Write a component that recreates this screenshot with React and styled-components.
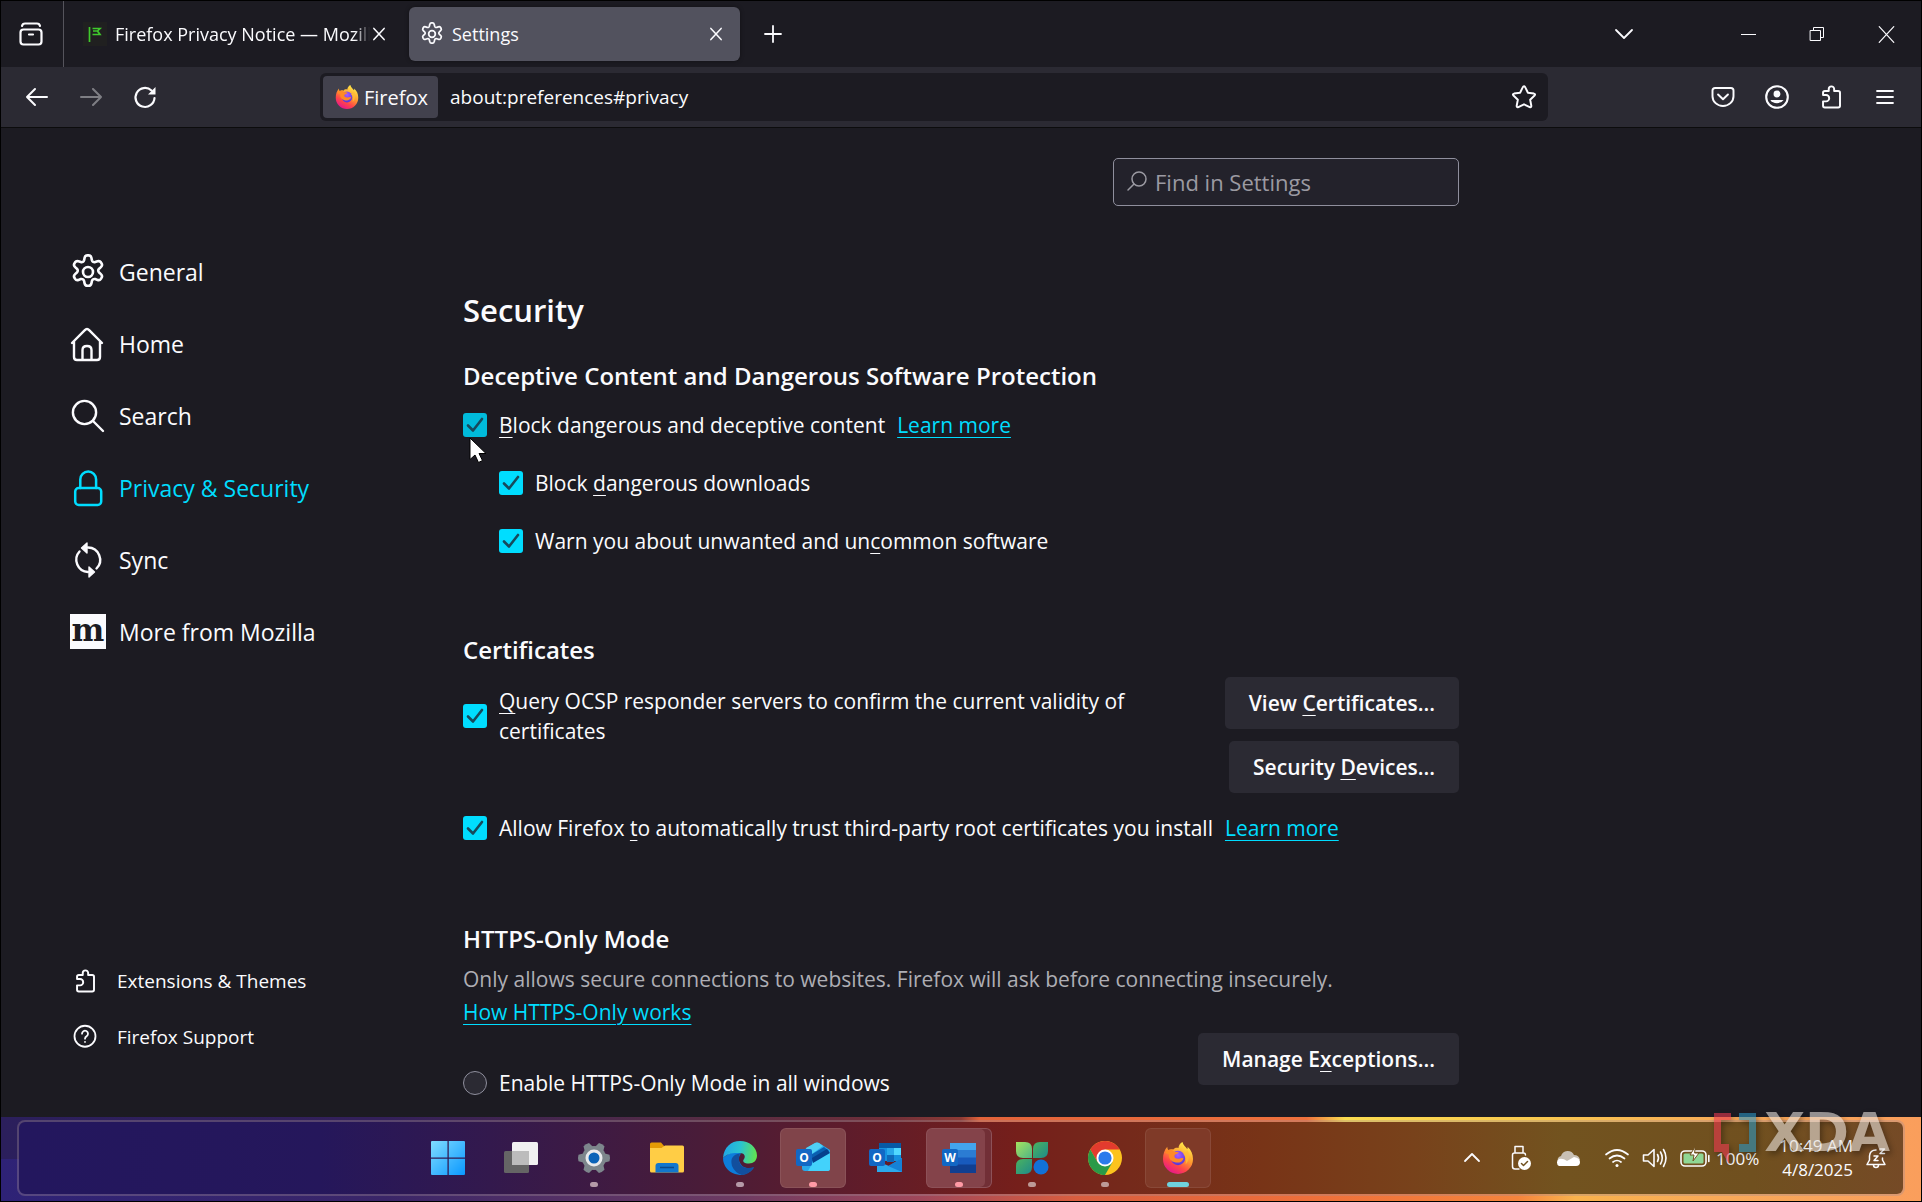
import React from 'react'
import styled, { createGlobalStyle, css } from 'styled-components'

const fonts = {
  ui: '"Open Sans", "Noto Sans", sans-serif',
}

const colors = {
  chrome: '#1c1b22',
  toolbar: '#2b2a33',
  text: '#fbfbfe',
  muted: '#aeaeb4',
  accent: '#00ddff',
}

const GlobalStyle = createGlobalStyle`
  * {
    box-sizing: border-box;
  }
  html, body, #root {
    height: 100%;
    margin: 0;
  }
  body {
    background: #000;
    color: ${colors.text};
    font-family: ${fonts.ui};
    font-size: 21px;
    overflow: hidden;
  }
  button, input {
    font-family: inherit;
    color: inherit;
  }
  svg {
    display: block;
    flex: none;
    overflow: visible;
  }
`

const Desktop = styled.div`
  display: flex;
  flex-direction: column;
  height: 100vh;
  padding: 1px;
`

const Browser = styled.div`
  display: flex;
  flex: 1;
  flex-direction: column;
  min-height: 0;
  background: ${colors.chrome};
`

/* tabs */

const TabStrip = styled.header`
  display: flex;
  align-items: stretch;
  height: 66px;
`

const PlainButton = styled.button`
  display: flex;
  align-items: center;
  justify-content: center;
  flex: none;
  width: ${props => props.$width || 54}px;
  padding: 0;
  border: 0;
  background: none;
  opacity: ${props => (props.disabled ? 0.4 : 1)};
`

const ViewButton = styled(PlainButton)`
  padding-right: 2px;
  border-right: 1px solid #55545c;
  margin-right: 8px;
`

const Tab = styled.div`
  display: flex;
  align-items: center;
  flex: 0 1 331px;
  min-width: 0;
  margin: 6px 6px 6px 0;
  padding: 0 18px 0 11px;
  border-radius: 6px;
  font-size: 18px;
  ${props => props.$active && css`
    background: #52525e;
    box-shadow: 0 0 4px rgba(0, 0, 0, 0.4);
  `}
`

const TabTitle = styled.span`
  flex: 1;
  min-width: 0;
  margin: 0 3px 0 8px;
  overflow: hidden;
  white-space: nowrap;
  ${props => props.$fade && css`
    mask-image: linear-gradient(to right, #000 94%, transparent);
  `}
`

const Spacer = styled.div`
  flex: 1;
`

const WindowControls = styled.div`
  display: flex;
  margin-left: 57px;
`

/* navigation */

const NavBar = styled.nav`
  display: flex;
  align-items: center;
  height: 61px;
  padding: 0 9px;
  background: ${colors.toolbar};
  border-bottom: 1px solid #0c0c0d;
`

const UrlBar = styled.div`
  display: flex;
  align-items: center;
  flex: 1;
  height: 48px;
  margin: 0 148px;
  padding: 0 3px;
  background: ${colors.chrome};
  border-radius: 6px;
`

const Identity = styled.button`
  display: flex;
  align-items: center;
  flex: none;
  gap: 5px;
  height: 42px;
  padding: 0 10px 0 12px;
  border: 0;
  border-radius: 4px;
  background: #42414d;
  font-size: 20px;
`

const UrlInput = styled.input`
  flex: 1;
  min-width: 0;
  padding: 0 12px;
  border: 0;
  outline: 0;
  background: none;
  font-size: 19px;
`

/* preferences page */

const Page = styled.div`
  display: flex;
  flex: 1;
  min-height: 0;
  overflow: hidden;
`

const Sidebar = styled.aside`
  display: flex;
  flex-direction: column;
  justify-content: space-between;
  flex: none;
  width: 462px;
  padding: 108px 0 52px 69px;
`

const NavList = styled.div`
  display: flex;
  flex-direction: column;
`

const Category = styled.a`
  display: flex;
  align-items: center;
  gap: 13px;
  height: 72px;
  color: ${props => (props.$selected ? colors.accent : colors.text)};
  font-size: 23px;
  text-decoration: none;
`

const FooterLink = styled(Category)`
  gap: 20px;
  height: 56px;
  padding-left: 3px;
  font-size: 19px;
`

const Main = styled.main`
  display: flex;
  flex: 1;
  flex-direction: column;
  max-width: 996px;
  padding-top: 30px;
`

const SearchBox = styled.label`
  display: flex;
  align-items: center;
  align-self: flex-end;
  gap: 7px;
  width: 346px;
  height: 48px;
  padding: 0 12px;
  border: 1px solid #8f8f9d;
  border-radius: 5px;
  background: #23222b;
`

const SearchInput = styled.input`
  flex: 1;
  min-width: 0;
  padding: 0;
  border: 0;
  outline: 0;
  background: none;
  font-size: 22px;
  &::placeholder {
    color: #9b9aa2;
    opacity: 1;
  }
`

const Title = styled.h1`
  margin: 82px 0 0;
  font-size: 31px;
  font-weight: 600;
  line-height: 44px;
`

const Heading = styled.h2`
  margin: ${props => props.$top || 0}px 0 ${props => props.$bottom || 0}px;
  font-size: 24px;
  font-weight: 600;
  line-height: 32px;
`

const Option = styled.div`
  display: flex;
  align-items: center;
  gap: 12px;
  min-height: 58px;
  padding-left: ${props => (props.$nested ? 36 : 0)}px;
  line-height: 30px;
`

const Check = styled.input`
  appearance: none;
  flex: none;
  width: 24px;
  height: 24px;
  margin: 0;
  border-radius: 3px;
  background: ${props => (props.$hover ? '#00bbdb' : colors.accent)}
    url("data:image/svg+xml,%3Csvg xmlns='http://www.w3.org/2000/svg' viewBox='0 0 24 24'%3E%3Cpath d='M5 12.5l5 5L19 6' fill='none' stroke='%23164a5c' stroke-width='2.6' stroke-linecap='round' stroke-linejoin='round'/%3E%3C/svg%3E");
`

const Radio = styled.input`
  appearance: none;
  flex: none;
  width: 24px;
  height: 24px;
  margin: 0;
  border: 1px solid #8f8f9d;
  border-radius: 50%;
  background: ${colors.toolbar};
`

const Key = styled.span`
  text-decoration: underline;
  text-decoration-skip-ink: none;
  text-decoration-thickness: 1px;
  text-underline-offset: 4px;
`

const Link = styled.a`
  color: ${colors.accent};
  text-decoration-thickness: 1px;
  text-underline-offset: 4px;
`

const Split = styled.div`
  display: flex;
  justify-content: space-between;
  align-items: flex-start;
  margin-bottom: 6px;
`

const QueryOption = styled(Option)`
  flex: 0 1 680px;
  padding-top: 20px;
`

const ModeOption = styled(Option)`
  padding-top: 35px;
`

const ButtonColumn = styled.div`
  display: flex;
  flex-direction: column;
  align-items: flex-end;
  gap: 12px;
  padding-top: ${props => props.$top || 0}px;
`

const ActionButton = styled.button`
  height: 52px;
  padding: 0 24px;
  border: 0;
  border-radius: 5px;
  background: ${colors.toolbar};
  font-size: 21px;
  font-weight: 600;
  white-space: nowrap;
`

const Description = styled.p`
  margin: 8px 0 4px;
  color: ${colors.muted};
  line-height: 33px;
`

const PointerAnchor = styled.span`
  position: relative;
  display: flex;
`

const Pointer = styled.svg`
  position: absolute;
  left: 6px;
  top: 24px;
`

/* taskbar */

const Taskbar = styled.footer`
  position: relative;
  height: 84px;
  padding: 3px 16px 5px;
  background:
    linear-gradient(90deg, #2b1f5c 0%, #33205a 20%, #552c45 36%, #6f2f3a 46%, #8c3a35 50%, #e2633a 51%, #ee713d 68%, #fbdc50 70%, #f9c94f 80%, #f8aa58 90%, #fa9e5c 100%) no-repeat 0 0 / 100% 50%,
    linear-gradient(90deg, #2e2276 0%, #3a2568 20%, #6c3a62 38%, #a0475a 48%, #d95d3e 56%, #ee6f3a 68%, #f5843c 79%, #f9b24c 82%, #f8a858 90%, #fa9e5c 100%);
`

const TaskPanel = styled.div`
  display: grid;
  grid-template-columns: 4fr auto 7fr;
  align-items: center;
  height: 76px;
  border: 2px solid rgba(160, 140, 150, 0.35);
  border-radius: 8px;
  background: linear-gradient(90deg, #23175e 0%, #25175b 16%, #33194d 25%, #491c39 36%, #5e1c2b 44%, #751f1b 53%, #752a1b 59%, #783417 66%, #78421b 74%, #72531f 82%, #70501f 92%, #754a26 100%) padding-box;
`

const AppList = styled.div`
  display: flex;
  grid-column: 2;
  gap: 7px;
`

const AppTile = styled.button`
  position: relative;
  display: flex;
  align-items: center;
  justify-content: center;
  width: 66px;
  height: 60px;
  padding: 0;
  border: 1px solid transparent;
  border-radius: 6px;
  background: none;
  ${props => props.$tone && css`
    background: ${props.$tone};
    border-color: rgba(255, 255, 255, 0.08);
  `}
  ${props => props.$stacked && css`
    box-shadow: inset -6px 0 0 rgba(90, 25, 30, 0.45);
  `}
`

const Indicator = styled.span`
  position: absolute;
  bottom: 0;
  left: 50%;
  width: ${props => (props.$wide ? 22 : 8)}px;
  height: 5px;
  border-radius: 3px;
  background: ${props => props.$color};
  transform: translateX(-50%);
`

const Tray = styled.div`
  display: flex;
  align-items: center;
  justify-content: flex-end;
  grid-column: 3;
  gap: 12px;
  padding-right: 16px;
`

const TrayGroup = styled.div`
  display: grid;
  grid-template-columns: repeat(3, 48px);
  justify-items: center;
  align-items: center;
`

const Battery = styled.span`
  display: flex;
  align-items: center;
  gap: 6px;
  font-size: 17px;
`

const Clock = styled.time`
  margin-left: 8px;
  font-size: 17px;
  line-height: 24px;
  text-align: right;
`

const Watermark = styled.div`
  position: absolute;
  right: 31px;
  top: -4px;
  display: flex;
  gap: 8px;
  opacity: 0.6;
  filter: drop-shadow(2px 3px 3px rgba(0, 0, 0, 0.6));
`

const WatermarkText = styled.span`
  color: #e5dfda;
  font-family: "DejaVu Sans", sans-serif;
  font-size: 53px;
  font-weight: 700;
  line-height: 40px;
`

const Icon = ({ size = 24, box = 16, children, ...rest }) => (
  <svg
    width={size}
    height={size}
    viewBox={`0 0 ${box} ${box}`}
    fill="none"
    stroke="currentColor"
    strokeLinecap="round"
    strokeLinejoin="round"
    aria-hidden="true"
    {...rest}
  >
    {children}
  </svg>
)

const GearIcon = ({ size }) => (
  <Icon size={size} box={36} strokeWidth="2.6">
    <circle cx="18" cy="18" r="5" />
    <path d="M14.600 3.800c.4-1.600 1.400-2.400 2.600-2.400h1.600c1.200 0 2.200.8 2.600 2.400l.5 2.400c.4 1.600 1.800 2.400 3.300 1.900l2.300-.8c1.500-.5 2.700-.1 3.400 1l.8 1.400c.6 1.100.4 2.300-.8 3.400l-1.800 1.600c-1.200 1.100-1.200 2.700 0 3.800l1.800 1.600c1.200 1.100 1.400 2.300.8 3.400l-.8 1.400c-.7 1.100-1.900 1.500-3.400 1l-2.300-.8c-1.500-.5-2.900.3-3.300 1.900l-.5 2.400c-.4 1.600-1.400 2.400-2.600 2.400h-1.600c-1.200 0-2.200-.8-2.600-2.400l-.5-2.400c-.4-1.600-1.800-2.400-3.300-1.900l-2.300.8c-1.500.5-2.700.1-3.400-1l-.8-1.400c-.6-1.100-.4-2.300.8-3.400l1.800-1.600c1.200-1.100 1.200-2.700 0-3.800l-1.800-1.600c-1.200-1.100-1.400-2.300-.8-3.400l.8-1.400c.7-1.100 1.900-1.500 3.400-1l2.300.8c1.500.5 2.900-.3 3.300-1.900z" />
  </Icon>
)

const HomeIcon = () => (
  <Icon size={36} box={36} strokeWidth="2.4">
    <path d="M2 17L14.600 4.300Q17 1.800 19.400 4.300L32 17M4 15.500V31q0 3 3 3h20q3 0 3-3V15.500M12.500 34V24q0-4 4.500-4t4.500 4v10" />
  </Icon>
)

const SearchIcon = () => (
  <Icon size={36} box={36} strokeWidth="2.4">
    <circle cx="14.5" cy="14.5" r="11.6" />
    <path d="M23 23l10 10" />
  </Icon>
)

const LockIcon = () => (
  <Icon size={36} box={36} strokeWidth="2.5">
    <rect x="5.2" y="18" width="26" height="17" rx="3.5" />
    <path d="M10.300 18V9.500a7.900 7.900 0 0 1 15.800 0V18" />
  </Icon>
)

const SyncIcon = () => (
  <Icon size={36} box={36} strokeWidth="2.4">
    <path d="M18 5.500a12.300 12.300 0 0 1 8.500 21M18 30a12.300 12.300 0 0 1-8.500-20.500" />
    <path d="M17 1v10l-5.500-5zM19 25v10l5.500-5z" fill="currentColor" strokeWidth="1.4" />
  </Icon>
)

const MozillaIcon = () => (
  <svg width="36" height="36" viewBox="0 0 36 36" aria-hidden="true">
    <path d="M0 0h36v35H0z" fill="#fbfbfe" />
    <text x="18" y="27" textAnchor="middle" fontFamily="DejaVu Serif, serif" fontWeight="bold" fontSize="31" fill="#1c1b22">m</text>
  </svg>
)

const PuzzleIcon = () => (
  <Icon strokeWidth="1.3">
    <path d="M2.700 6.700V5.200q0-1.200 1.200-1.200H6.500V2.700a1.800 1.800 0 0 1 3.600 0V4h2.700q1.200 0 1.200 1.200v8.600q0 1.200-1.200 1.200H3.900q-1.200 0-1.200-1.200V10.900h2a2.100 2.100 0 0 0 0-4.200z" />
  </Icon>
)

const HelpIcon = () => (
  <Icon strokeWidth="1.2">
    <circle cx="8" cy="7.5" r="7" />
    <path d="M6 5.800a2 2 0 1 1 3.200 1.600Q8 8.100 8 9.100M8 11.200v.1" />
  </Icon>
)

const CloseIcon = ({ size = 12, width = 1.8 }) => (
  <Icon size={size} box={14} strokeWidth={width}>
    <path d="M1 .5l12 13M13 .5l-12 13" />
  </Icon>
)

const FirefoxLogo = ({ size, id }) => (
  <svg width={size} height={size} viewBox="0 0 32 32" aria-hidden="true">
    <defs>
      <linearGradient id={`${id}-body`} x1=".8" y1=".1" x2=".3" y2="1">
        <stop offset="0" stopColor="#ffe848" />
        <stop offset=".4" stopColor="#ff9a2e" />
        <stop offset=".7" stopColor="#ff4648" />
        <stop offset="1" stopColor="#e4148f" />
      </linearGradient>
      <radialGradient id={`${id}-globe`} cx=".5" cy=".3" r=".7">
        <stop offset="0" stopColor="#a65cff" />
        <stop offset="1" stopColor="#5536d6" />
      </radialGradient>
    </defs>
    <path d="M20.500 0c.5 3.200 3 4.500 4.700 7 .6-.6.500-1.500.3-2.300 3.700 3 5.500 7.500 5.500 12.300A15 15 0 0 1 1 17C1 12 2.400 8 5.300 4.800c0 1.500.3 2.400 1 3.100C8 7 9.700 7 11.300 7.500 12.500 5.500 15 5.500 16.500 6c0-2.600 1.700-4.700 4-6z" fill={`url(#${id}-body)`} />
    <circle cx="16" cy="16" r="7.2" fill={`url(#${id}-globe)`} />
    <path d="M3 11c3-4.500 7-3.600 9.200-1.200 1.500.2 3 .1 4.500.4-.2 1.700-3.700 1.800-4.200 3.200-.6 2.200 1.500 3.600 4.500 3.300 1.800-.2 3-1 4.500-.3-1 3.200-4 4.500-7.500 4.100C8.500 19.800 6.500 16 6.800 12z" fill="#ff8a25" />
    <path d="M25 8c3 4 2.500 11-1.500 14.500 1.200-4.500.2-8-2.500-11 2.500.3 3.500-1 4-3.500z" fill="#ffbd36" opacity=".8" />
  </svg>
)

const OfficeBadge = ({ letter = 'O' }) => (
  <>
    <rect x="0" y="7" width="16" height="17" rx="2" fill="#1267c4" />
    <text x="8" y="20" textAnchor="middle" fontFamily="Open Sans, sans-serif" fontWeight="bold" fontSize="12" fill="#fff">{letter}</text>
  </>
)

const StartLogo = () => (
  <svg width="34" height="34" viewBox="0 0 32 32">
    <defs>
      <linearGradient id="start" x1="0" y1="0" x2="1" y2="1">
        <stop offset="0" stopColor="#80dcff" />
        <stop offset="1" stopColor="#0a98ff" />
      </linearGradient>
    </defs>
    <path d="M1 0h14.500v15.500H0V1q0-1 1-1zM16.700 0H31q1 0 1 1v14.500H16.700zM0 16.700h15.500V32H1q-1 0-1-1zM16.700 16.700H32V31q0 1-1 1H16.700z" fill="url(#start)" />
  </svg>
)

const TaskViewLogo = () => (
  <svg width="34" height="32" viewBox="0 0 34 32">
    <rect x="0" y="9" width="25" height="22" rx="1.5" fill="#656565" />
    <rect x="8" y="0" width="26" height="23" rx="1.5" fill="#f1f1f1" />
    <path d="M8 9h17v14H8z" fill="#bcbcbc" />
  </svg>
)

const SettingsLogo = () => (
  <svg width="34" height="34" viewBox="0 0 34 34">
    <g fill="#7d868c">
      <circle cx="17" cy="17" r="12" />
      {[30, 90, 150, 210, 270, 330].map(angle => (
        <path key={angle} d="M12 8l1.800-6.500q3.200-1 6.400 0L22 8z" transform={`rotate(${angle} 17 17)`} />
      ))}
    </g>
    <circle cx="17" cy="17" r="7" fill="#0a63b8" stroke="#e8eaec" strokeWidth="3" />
  </svg>
)

const ExplorerLogo = () => (
  <svg width="34" height="32" viewBox="0 0 34 32">
    <path d="M0 8V2q0-1.500 1.500-1.500H11l3.500 4V8z" fill="#e59b05" />
    <path d="M0 6h11.500L15 3.500h17.500q1.500 0 1.500 1.500v24q0 1.500-1.500 1.500h-31Q0 30.500 0 29z" fill="#ffcd45" />
    <path d="M5.500 30.500V24q0-3 3-3h17q3 0 3 3v6.500z" fill="#1277cd" />
    <path d="M10 25.500h14" stroke="#0b4a8b" strokeWidth="1.5" />
  </svg>
)

const EdgeLogo = () => (
  <svg width="34" height="34" viewBox="0 0 34 34">
    <defs>
      <linearGradient id="edge-top" x1="0" y1=".4" x2="1" y2=".5">
        <stop offset="0" stopColor="#20a5e6" />
        <stop offset=".5" stopColor="#2ac3cf" />
        <stop offset="1" stopColor="#62e34e" />
      </linearGradient>
    </defs>
    <path d="M0 17a17 17 0 0 0 31 9.500q-9 2.500-13-3-4.500-6 0-11Q10 8 0 17z" fill="#0d7ddb" />
    <path d="M17 12.500Q6 14 9 25q3 7 10 9 8-1 12-8-9 3-13.500-2.500-3-5-.5-11z" fill="#124f9e" />
    <path d="M0 17C1 6 8 0 17 0s17 6 17 14.500c0 5-3.500 8-8 8-5 0-7-2-5-4.500 2-3 0-6-4-6-7-.5-13 .5-17 5z" fill="url(#edge-top)" />
  </svg>
)

const NewOutlookLogo = () => (
  <svg width="34" height="32" viewBox="0 0 34 32">
    <path d="M6 9L19 1q2-1 4 0l11 7v18q0 3-3 3H9q-3 0-3-3z" fill="#28a8ea" />
    <path d="M10 6l9-5q2-1 4 0l4 3L13 14z" fill="#4fd0f5" />
    <path d="M13 14l15-9 5 4-16 11z" fill="#0a5fb0" />
    <path d="M34 10v17q0 2-3 2H12l5-9z" fill="#43d2fb" />
    <path d="M16 16L31 7l3 4-17 10z" fill="#063f8c" />
    <OfficeBadge />
  </svg>
)

const OutlookLogo = () => (
  <svg width="34" height="32" viewBox="0 0 34 32">
    <path d="M10 1h22v18H10z" fill="#1490df" />
    <path d="M10 1h22v5H10z" fill="#0759a5" />
    <path d="M18 6h7v7h-7z" fill="#28a8ea" />
    <path d="M25 6h7v7h-7z" fill="#50d9ff" />
    <path d="M18 13h7v7h-7z" fill="#0f68b8" />
    <path d="M8 19l12 5 13-8v14H8z" fill="#2ba9ec" />
    <path d="M33 16v14L19 24z" fill="#1581d6" />
    <OfficeBadge />
  </svg>
)

const WordLogo = () => (
  <svg width="34" height="32" viewBox="0 0 34 32">
    <path d="M8 1h26v8H8z" fill="#43a5ee" />
    <path d="M8 8h26v8H8z" fill="#2b7cd3" />
    <path d="M8 15.500h26V23H8z" fill="#185abd" />
    <path d="M8 22.500h26V31H8z" fill="#103f91" />
    <OfficeBadge letter="W" />
  </svg>
)

const CloverLogo = () => (
  <svg width="34" height="34" viewBox="0 0 34 34">
    <defs>
      <linearGradient id="leaf-light" x1="0" y1="0" x2="1" y2="1">
        <stop offset="0" stopColor="#a5e25f" />
        <stop offset="1" stopColor="#4fb586" />
      </linearGradient>
      <linearGradient id="leaf-dark" x1="0" y1="0" x2="1" y2="1">
        <stop offset="0" stopColor="#4bb35f" />
        <stop offset="1" stopColor="#1f8a8a" />
      </linearGradient>
    </defs>
    <path d="M1 1h9q7 0 7 7v9H8q-7 0-7-7z" fill="url(#leaf-light)" />
    <path d="M33 1h-8q-7 0-7 7v9h8q7 0 7-7z" fill="url(#leaf-dark)" />
    <path d="M1 33h9q7 0 7-7v-8H8q-7 0-7 7z" fill="url(#leaf-dark)" />
    <circle cx="26" cy="26" r="7.5" fill="#1271d8" />
  </svg>
)

const ChromeLogo = () => (
  <svg width="34" height="34" viewBox="0 0 34 34">
    <circle cx="17" cy="17" r="17" fill="#fcc31e" />
    <path d="M2.300 8.500A17 17 0 0 1 31.700 8.500H17L9.600 21.200z" fill="#e33b2e" />
    <path d="M2.300 8.500A17 17 0 0 0 17 34l7.400-12.800H9.600z" fill="#2a9a48" />
    <circle cx="17" cy="17" r="8.5" fill="#fff" />
    <circle cx="17" cy="17" r="6.6" fill="#2a7bec" />
  </svg>
)

const categories = [
  { label: 'General', icon: <GearIcon size={36} /> },
  { label: 'Home', icon: <HomeIcon /> },
  { label: 'Search', icon: <SearchIcon /> },
  { label: 'Privacy & Security', icon: <LockIcon />, selected: true },
  { label: 'Sync', icon: <SyncIcon /> },
  { label: 'More from Mozilla', icon: <MozillaIcon /> },
]

const apps = [
  { name: 'Start', logo: <StartLogo /> },
  { name: 'Task View', logo: <TaskViewLogo /> },
  { name: 'Settings', logo: <SettingsLogo />, dot: '#b59aa8' },
  { name: 'File Explorer', logo: <ExplorerLogo /> },
  { name: 'Edge', logo: <EdgeLogo />, dot: '#b59aa8' },
  { name: 'Outlook', logo: <NewOutlookLogo />, dot: '#ff9aa5', tone: '#80444a' },
  { name: 'Outlook classic', logo: <OutlookLogo /> },
  { name: 'Word', logo: <WordLogo />, dot: '#ff9aa5', tone: '#84434a', stacked: true },
  { name: 'Clover', logo: <CloverLogo />, dot: '#bd9a97' },
  { name: 'Chrome', logo: <ChromeLogo />, dot: '#bd9a97' },
  { name: 'Firefox', logo: <FirefoxLogo size={32} id="task" />, dot: '#6fd2dd', tone: '#7f3a28', wide: true },
]

const Tabs = () => (
  <TabStrip>
    <ViewButton $width={63} aria-label="Firefox View">
      <Icon size={24} box={24} strokeWidth="2.2">
        <rect x="1.5" y="7.5" width="21" height="15" rx="3" />
        <path d="M3 4q.5-2.500 3-2.500h12q2.500 0 3 2.500M10 12.500h4" />
      </Icon>
    </ViewButton>
    <Tab>
      <svg width="24" height="24" viewBox="0 0 24 24" aria-hidden="true">
        <path d="M0 0h24v24H0z" fill="#202020" />
        <path d="M6.500 5v15M9.500 6.500h7.500l-2.500 2.500 2.500 3.500H9.500M10 9h5" fill="none" stroke="#3fc92c" strokeWidth="1.7" />
      </svg>
      <TabTitle $fade>Firefox Privacy Notice — Mozilla</TabTitle>
      <PlainButton $width={12} aria-label="Close tab"><CloseIcon /></PlainButton>
    </Tab>
    <Tab $active>
      <GearIcon size={24} />
      <TabTitle>Settings</TabTitle>
      <PlainButton $width={12} aria-label="Close tab"><CloseIcon /></PlainButton>
    </Tab>
    <PlainButton aria-label="New tab">
      <Icon size={18} box={18} strokeWidth="1.8"><path d="M9 1v16M1 9h16" /></Icon>
    </PlainButton>
    <Spacer />
    <PlainButton $width={66} aria-label="List all tabs">
      <Icon size={18} box={18} strokeWidth="1.8"><path d="M1 5l8 8 8-8" /></Icon>
    </PlainButton>
    <WindowControls>
      <PlainButton $width={69} aria-label="Minimize">
        <Icon size={15} box={15} strokeLinecap="butt"><path d="M0 7.500h15" /></Icon>
      </PlainButton>
      <PlainButton $width={69} aria-label="Restore">
        <Icon size={15} box={15} strokeLinejoin="miter">
          <path d="M.5 3.500h10v10H.5zM3.500 3.500v-3h10v10h-3" />
        </Icon>
      </PlainButton>
      <PlainButton $width={69} aria-label="Close"><CloseIcon size={17} width={1} /></PlainButton>
    </WindowControls>
  </TabStrip>
)

const Navigation = () => (
  <NavBar>
    <PlainButton aria-label="Back">
      <Icon size={24} box={24} strokeWidth="2"><path d="M22 12H2M10 4l-8 8 8 8" /></Icon>
    </PlainButton>
    <PlainButton aria-label="Forward" disabled>
      <Icon size={24} box={24} strokeWidth="2"><path d="M2 12h20M14 4l8 8-8 8" /></Icon>
    </PlainButton>
    <PlainButton aria-label="Reload">
      <Icon size={24} box={24} strokeWidth="2.2">
        <path d="M21.500 13A9.500 9.500 0 1 1 18.500 5.500" />
        <path d="M22.500 2v7.500H15z" fill="currentColor" stroke="none" />
      </Icon>
    </PlainButton>
    <UrlBar>
      <Identity><FirefoxLogo size={24} id="url" />Firefox</Identity>
      <UrlInput aria-label="Address" defaultValue="about:preferences#privacy" />
      <PlainButton $width={42} aria-label="Bookmark">
        <Icon size={26} strokeWidth="1.2">
          <path d="M8 1.400q.5 0 .8.700l1.600 3.300 3.700.5q1.200.3.400 1.200l-2.700 2.600.7 3.700q.1 1.200-1 .8L8 12.500l-3.500 1.700q-1.100.4-1-.8l.7-3.700L1.500 7.100q-.8-.9.400-1.200l3.700-.5 1.600-3.300q.3-.7.800-.7z" />
        </Icon>
      </PlainButton>
    </UrlBar>
    <PlainButton aria-label="Pocket">
      <Icon strokeWidth="1.3">
        <path d="M2.700 2h10.600Q15 2 15 3.700V7.500a7 6.500 0 0 1-14 0V3.700Q1 2 2.700 2zM4.700 6.300L8 9.500l3.300-3.200" />
      </Icon>
    </PlainButton>
    <PlainButton aria-label="Account">
      <Icon strokeWidth="1.4">
        <circle cx="8" cy="8" r="7.2" />
        <circle cx="8" cy="6" r="2.3" fill="currentColor" stroke="none" />
        <path d="M3.600 10h8.800a4.800 3.500 0 0 1-8.800 0z" fill="currentColor" stroke="none" />
      </Icon>
    </PlainButton>
    <PlainButton aria-label="Extensions"><PuzzleIcon /></PlainButton>
    <PlainButton aria-label="Menu">
      <Icon size={18} box={18} strokeWidth="1.8"><path d="M1 3h16M1 9h16M1 15h16" /></Icon>
    </PlainButton>
  </NavBar>
)

const Preferences = () => (
  <Main>
    <SearchBox>
      <Icon size={22} box={22} strokeWidth="1.5" stroke="#9b9aa2">
        <circle cx="13" cy="8" r="7" />
        <path d="M8 13l-6 6" />
      </Icon>
      <SearchInput aria-label="Find in Settings" placeholder="Find in Settings" />
    </SearchBox>

    <Title>Security</Title>
    <Heading $top={28} $bottom={4}>Deceptive Content and Dangerous Software Protection</Heading>
    <Option>
      <PointerAnchor>
        <Check type="checkbox" id="block-content" defaultChecked $hover />
        <Pointer width="18" height="26" viewBox="0 0 18 26">
          <path d="M1 1v21.500l5-4.500 3.500 7.500 4-2-3.500-7h7z" fill="#fff" stroke="#000" />
        </Pointer>
      </PointerAnchor>
      <label htmlFor="block-content"><Key>B</Key>lock dangerous and deceptive content</label>
      <Link href="#learn-more">Learn more</Link>
    </Option>
    <Option $nested>
      <Check type="checkbox" id="block-downloads" defaultChecked />
      <label htmlFor="block-downloads">Block <Key>d</Key>angerous downloads</label>
    </Option>
    <Option $nested>
      <Check type="checkbox" id="block-uncommon" defaultChecked />
      <label htmlFor="block-uncommon">Warn you about unwanted and un<Key>c</Key>ommon software</label>
    </Option>

    <Heading $top={64}>Certificates</Heading>
    <Split>
      <QueryOption>
        <Check type="checkbox" id="ocsp" defaultChecked />
        <label htmlFor="ocsp"><Key>Q</Key>uery OCSP responder servers to confirm the current validity of certificates</label>
      </QueryOption>
      <ButtonColumn $top={11}>
        <ActionButton>View <Key>C</Key>ertificates...</ActionButton>
        <ActionButton>Security <Key>D</Key>evices...</ActionButton>
      </ButtonColumn>
    </Split>
    <Option>
      <Check type="checkbox" id="roots" defaultChecked />
      <label htmlFor="roots">Allow Firefox <Key>t</Key>o automatically trust third-party root certificates you install</label>
      <Link href="#learn-more">Learn more</Link>
    </Option>

    <Heading $top={66}>HTTPS-Only Mode</Heading>
    <Description>
      Only allows secure connections to websites. Firefox will ask before connecting insecurely.
      <br />
      <Link href="#https-only">How HTTPS-Only works</Link>
    </Description>
    <Split>
      <ModeOption>
        <Radio type="radio" name="https" id="https-all" />
        <label htmlFor="https-all">Enable HTTPS-Only Mode in all windows</label>
      </ModeOption>
      <ActionButton>Manage E<Key>x</Key>ceptions...</ActionButton>
    </Split>
  </Main>
)

const SystemTray = () => (
  <Tray>
    <TrayGroup>
      <Icon size={18} box={18} strokeWidth="1.8"><path d="M2 12l7-7 7 7" /></Icon>
      <Icon size={24} box={24} strokeWidth="1.5">
        <path d="M7 7V.500h8V7M11 23H7q-2.500 0-2.500-2.500V9q0-2 2-2h9q2 0 2 2" />
        <circle cx="16.5" cy="17.5" r="6.5" fill="#fff" stroke="none" />
        <path d="M13.500 17.500l2 2 4-4" stroke="#70501f" />
      </Icon>
      <svg width="26" height="18" viewBox="0 0 26 18">
        <path d="M4 14a4 4 0 0 1 2-7 7 7 0 0 1 13-1q5 0 6 5z" fill="#c8c0b4" />
        <path d="M4 17a4 4 0 0 1 0-7q4-1 8 2l7-4q6 1 6 5t-4 4z" fill="#fff" />
      </svg>
    </TrayGroup>
    <Icon size={26} box={26} strokeWidth="1.7">
      <path d="M2 9.500q11-9 22 0M5.500 13.500q7.500-6 15 0M9 17q4-3 8 0" />
      <circle cx="13" cy="20.5" r="1.5" fill="#fff" stroke="none" />
    </Icon>
    <Icon size={26} box={26} strokeWidth="1.6">
      <path d="M1.500 10H6l6-5.500v17L6 16H1.500zM15.500 9.500q2 3.500 0 7M18.500 7q3.500 6 0 12M21.500 4.500q5 8.500 0 17" />
    </Icon>
    <Battery>
      <Icon size={30} box={30} strokeWidth="1.6">
        <rect x="1" y="8" width="25" height="15" rx="4" />
        <path d="M28.800 12.500v6" />
        <rect x="3.500" y="10.500" width="20" height="10" rx="1.5" fill="#8fd694" stroke="none" />
        <path d="M15 4l-5 8h4l-1 6 6-8h-4z" fill="#fff" stroke="#70501f" strokeWidth="1" />
      </Icon>
      100%
    </Battery>
    <Clock>10:49 AM<br />4/8/2025</Clock>
    <Icon size={22} box={22} strokeWidth="1.5">
      <path d="M11 3Q5 3 4.500 9v4L2 17.500h18L17.500 13v-2M8.500 18a2.500 2.500 0 0 0 5 0M9 9h4l-4 4.500h4M15 2h4.500L15 6.500h4.500" />
    </Icon>
  </Tray>
)

const App = () => (
  <Desktop>
    <GlobalStyle />
    <Browser>
      <Tabs />
      <Navigation />
      <Page>
        <Sidebar>
          <NavList>
            {categories.map(({ label, icon, selected }) => (
              <Category key={label} href={`#${label}`} $selected={selected}>{icon}{label}</Category>
            ))}
          </NavList>
          <NavList>
            <FooterLink href="#addons"><PuzzleIcon />Extensions &amp; Themes</FooterLink>
            <FooterLink href="#support"><HelpIcon />Firefox Support</FooterLink>
          </NavList>
        </Sidebar>
        <Preferences />
      </Page>
    </Browser>
    <Taskbar>
      <TaskPanel>
        <AppList>
          {apps.map(({ name, logo, dot, tone, wide, stacked }) => (
            <AppTile key={name} aria-label={name} $tone={tone} $stacked={stacked}>
              {logo}
              {dot && <Indicator $color={dot} $wide={wide} />}
            </AppTile>
          ))}
        </AppList>
        <SystemTray />
      </TaskPanel>
      <Watermark>
        <svg width="42" height="52" viewBox="0 0 42 52">
          <path d="M17 0H0v39h8l7 12V31H7V7h10z" fill="#e8384f" />
          <path d="M25 0h17v39H25v-8h10V7H25z" fill="#2a93c0" />
        </svg>
        <WatermarkText>XDA</WatermarkText>
      </Watermark>
    </Taskbar>
  </Desktop>
)

export default App
